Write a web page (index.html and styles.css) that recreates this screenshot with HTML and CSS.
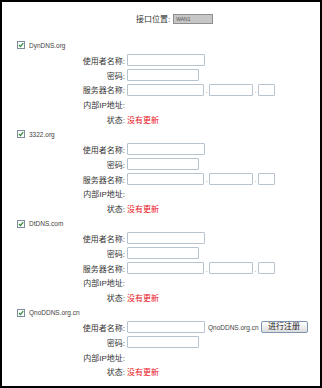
FILE: index.html
```html
<!DOCTYPE html>
<html lang="zh-CN">
<head>
  <meta charset="UTF-8" />
  <title>DDNS</title>
  <link rel="stylesheet" href="styles.css">
</head>
<body>
  <div class="frame">
    <div class="iface">
      <span class="iface-label">接口位置:</span>
      <span class="iface-box">WAN1</span>
    </div>

    <div class="section">
      <div class="head">
        <svg class="check" viewBox="0 0 8 8"><rect x="0.5" y="0.5" width="7" height="7" fill="#fff" stroke="#7d8c99"/><path d="M2 4 L3.5 5.6 L6.2 2.2" fill="none" stroke="#2f8a3a" stroke-width="1.3"/></svg>
        <span class="name">DynDNS.org</span>
      </div>
      <div class="row"><span class="label">使用者名称:</span><input class="field w-user" type="text"></div>
      <div class="row"><span class="label">密码:</span><input class="field w-pass" type="password"></div>
      <div class="row"><span class="label">服务器名称:</span><input class="field w-host" type="text"><span class="dot">.</span><input class="field w-mid" type="text"><span class="dot">.</span><input class="field w-tld" type="text"></div>
      <div class="row"><span class="label">内部IP地址:</span></div>
      <div class="row"><span class="label">状态:</span><span class="status">没有更新</span></div>
    </div>

    <div class="section">
      <div class="head">
        <svg class="check" viewBox="0 0 8 8"><rect x="0.5" y="0.5" width="7" height="7" fill="#fff" stroke="#7d8c99"/><path d="M2 4 L3.5 5.6 L6.2 2.2" fill="none" stroke="#2f8a3a" stroke-width="1.3"/></svg>
        <span class="name">3322.org</span>
      </div>
      <div class="row"><span class="label">使用者名称:</span><input class="field w-user" type="text"></div>
      <div class="row"><span class="label">密码:</span><input class="field w-pass" type="password"></div>
      <div class="row"><span class="label">服务器名称:</span><input class="field w-host" type="text"><span class="dot">.</span><input class="field w-mid" type="text"><span class="dot">.</span><input class="field w-tld" type="text"></div>
      <div class="row"><span class="label">内部IP地址:</span></div>
      <div class="row"><span class="label">状态:</span><span class="status">没有更新</span></div>
    </div>

    <div class="section">
      <div class="head">
        <svg class="check" viewBox="0 0 8 8"><rect x="0.5" y="0.5" width="7" height="7" fill="#fff" stroke="#7d8c99"/><path d="M2 4 L3.5 5.6 L6.2 2.2" fill="none" stroke="#2f8a3a" stroke-width="1.3"/></svg>
        <span class="name">DtDNS.com</span>
      </div>
      <div class="row"><span class="label">使用者名称:</span><input class="field w-user" type="text"></div>
      <div class="row"><span class="label">密码:</span><input class="field w-pass" type="password"></div>
      <div class="row"><span class="label">服务器名称:</span><input class="field w-host" type="text"><span class="dot">.</span><input class="field w-mid" type="text"><span class="dot">.</span><input class="field w-tld" type="text"></div>
      <div class="row"><span class="label">内部IP地址:</span></div>
      <div class="row"><span class="label">状态:</span><span class="status">没有更新</span></div>
    </div>

    <div class="section">
      <div class="head">
        <svg class="check" viewBox="0 0 8 8"><rect x="0.5" y="0.5" width="7" height="7" fill="#fff" stroke="#7d8c99"/><path d="M2 4 L3.5 5.6 L6.2 2.2" fill="none" stroke="#2f8a3a" stroke-width="1.3"/></svg>
        <span class="name">QnoDDNS.org.cn</span>
      </div>
      <div class="row"><span class="label">使用者名称:</span><input class="field w-user" type="text"><span class="suffix">QnoDDNS.org.cn</span><button class="reg">进行注册</button></div>
      <div class="row"><span class="label">密码:</span><input class="field w-pass" type="password"></div>
      <div class="row"><span class="label">内部IP地址:</span></div>
      <div class="row"><span class="label">状态:</span><span class="status">没有更新</span></div>
    </div>
  </div>
</body>
</html>
```

FILE: styles.css
```css
body {
  margin: 0;
  background-color: #fff;
}
.frame {
  width: 322px;
  height: 388px;
  box-sizing: border-box;
  border: 2px solid #000;
  padding-top: 9px;
  background-color: #fff;
  font-family: 'Liberation Sans', 'Noto Sans CJK SC', sans-serif;
  font-size: 8px;
  color: #333;
  overflow: hidden;
}
.iface {
  display: flex;
  align-items: center;
  height: 15px;
  padding-left: 134px;
}
.iface-label {
  margin-right: 3px;
}
.iface-box {
  width: 40px;
  height: 10px;
  box-sizing: border-box;
  border: 1px solid #8e8e8e;
  background-color: #c6c6c6;
  color: #555;
  font-size: 5px;
  line-height: 8px;
  padding-left: 2px;
}
.section {
  margin-top: 12px;
}
.section + .section {
  margin-top: 0;
}
.head {
  display: flex;
  align-items: center;
  height: 14.85px;
  padding-left: 15px;
  color: #444;
}
.check {
  width: 8px;
  height: 8px;
  margin-right: 4px;
}
.name {
  font-size: 6.5px;
}
.row {
  display: flex;
  align-items: center;
  height: 14.85px;
}
.label {
  width: 123px;
  text-align: right;
  margin-right: 2px;
  color: #333;
}
.field {
  height: 12px;
  box-sizing: border-box;
  border: 1px solid #b8c3d0;
  border-radius: 1px;
  background-color: #fff;
  padding: 0;
  margin: 0;
}
.w-user { width: 78px; }
.w-pass { width: 72px; }
.w-host { width: 77px; }
.w-mid { width: 44px; }
.w-tld { width: 17px; }
.dot {
  width: 5px;
  text-align: center;
  color: #999;
  align-self: flex-end;
  line-height: 12px;
}
.status {
  color: #e8131b;
}
.suffix {
  margin-left: 3px;
  margin-right: 2px;
  font-size: 6.5px;
  color: #444;
}
.reg {
  width: 47px;
  height: 12px;
  padding: 0;
  margin: 0;
  border: 1px solid #7f93b2;
  border-radius: 2px;
  background: linear-gradient(#ffffff, #dcdcdc);
  font-family: 'Liberation Sans', 'Noto Sans CJK SC', sans-serif;
  font-size: 8px;
  line-height: 10px;
  color: #222;
}
```
